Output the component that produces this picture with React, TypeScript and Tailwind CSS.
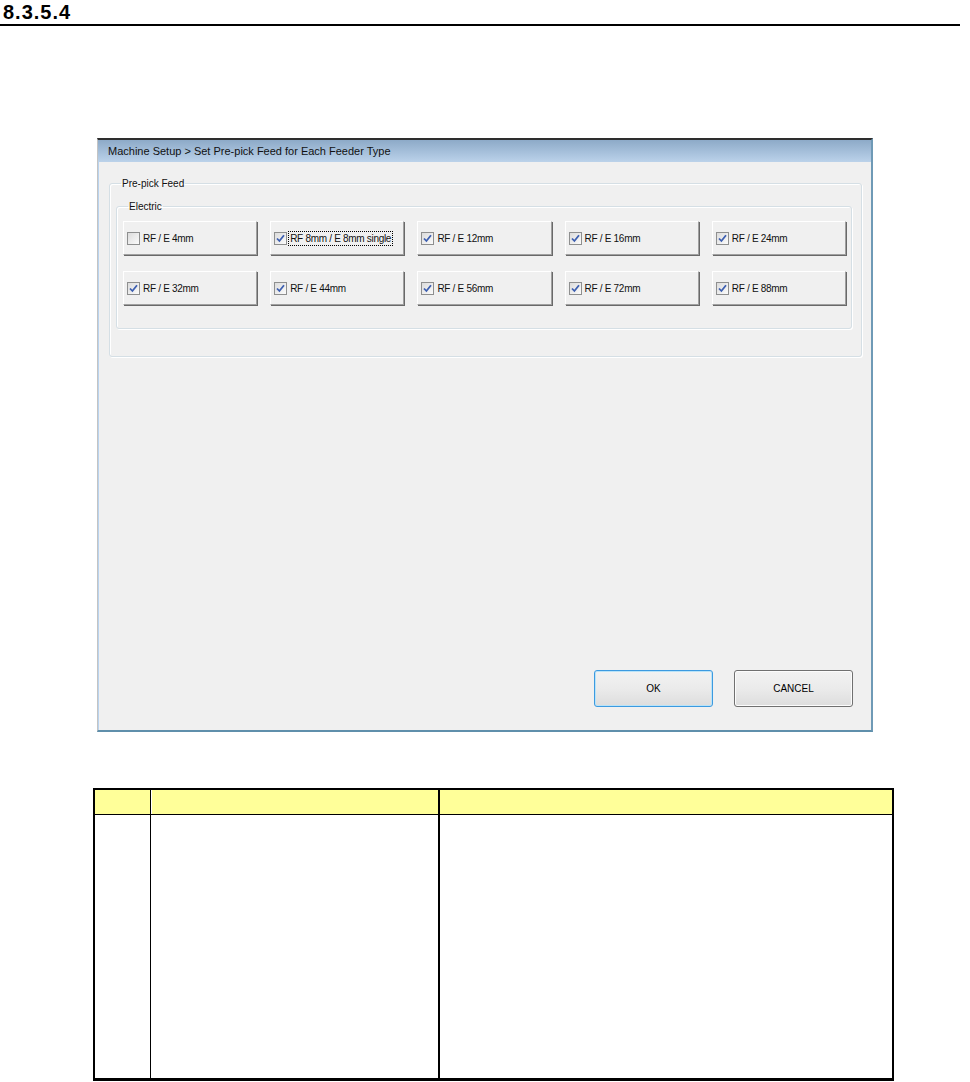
import type { ReactNode } from "react";

const feeders = [
  { label: "RF / E 4mm", checked: false },
  { label: "RF 8mm / E 8mm single", checked: true, focus: true },
  { label: "RF / E 12mm", checked: true },
  { label: "RF / E 16mm", checked: true },
  { label: "RF / E 24mm", checked: true },
  { label: "RF / E 32mm", checked: true },
  { label: "RF / E 44mm", checked: true },
  { label: "RF / E 56mm", checked: true },
  { label: "RF / E 72mm", checked: true },
  { label: "RF / E 88mm", checked: true },
];

function CheckBox({ checked }: { checked: boolean }) {
  return (
    <span className="flex h-[13px] w-[13px] shrink-0 items-center justify-center border border-[#8e8f8f] bg-gradient-to-br from-[#dcdcdc] to-[#fbfbfb]">
      {checked ? (
        <svg width="9" height="9" viewBox="0 0 9 9">
          <path d="M1 4.5 L3.4 7 L8 1.2" fill="none" stroke="#3d5fb0" strokeWidth="1.8" />
        </svg>
      ) : null}
    </span>
  );
}

function FeederButton({ label, checked, focus }: { label: string; checked: boolean; focus?: boolean }) {
  return (
    <div className="flex h-[34px] items-center gap-[2px] border border-t-white border-l-white border-r-[#a0a0a0] border-b-[#a0a0a0] bg-[#f0f0f0] pl-[3px] shadow-[1px_1px_0_#696969]">
      <CheckBox checked={checked} />
      <span
        className={`px-[1px] text-[10px] leading-[13px] tracking-[-0.3px] text-[#111] ${
          focus ? "outline outline-1 outline-dotted outline-black" : ""
        }`}
      >
        {label}
      </span>
    </div>
  );
}

function Group({ title, className, children }: { title: string; className?: string; children: ReactNode }) {
  return (
    <fieldset className={`rounded-[3px] border border-[#d5dfe5] shadow-[inset_1px_1px_0_#fff,1px_1px_0_#fff] ${className ?? ""}`}>
      <legend className="ml-[5px] px-[1px] text-[10px] leading-[13px] text-[#111]">{title}</legend>
      {children}
    </fieldset>
  );
}

function DialogButton({ label, primary }: { label: string; primary?: boolean }) {
  return (
    <div
      className={`flex h-[37px] w-[119px] items-center justify-center rounded-[3px] border bg-gradient-to-b from-[#f2f2f2] via-[#ebebeb] to-[#dddddd] text-[10px] text-black ${
        primary ? "border-[#3c9ae0] shadow-[inset_0_0_0_1px_#b9e3f8]" : "border-[#707070] shadow-[inset_0_0_0_1px_#fcfcfc]"
      }`}
    >
      {label}
    </div>
  );
}

export default function App() {
  return (
    <div className="h-[1082px] w-[970px] overflow-hidden bg-white font-['Liberation_Sans',Arial,sans-serif]">
      <div className="mr-[10px] border-b-2 border-black pl-[3px] text-[20px] font-bold leading-[24px] tracking-[1px] text-black">
        8.3.5.4
      </div>

      <div className="ml-[97px] mt-[112px] flex h-[594px] w-[776px] flex-col border-t-2 border-t-[#2e2e2e] border-l border-l-[#c4c4c4] border-r-2 border-r-[#6f9ab6] border-b-2 border-b-[#5f8fab] bg-[#f0f0f0]">
        <div className="flex h-[22px] items-center bg-gradient-to-b from-[#8daac8] to-[#bbd2ea] pl-[10px] text-[11px] text-[#111]">
          Machine Setup &gt; Set Pre-pick Feed for Each Feeder Type
        </div>
        <div className="flex flex-1 flex-col border-l border-l-[#b9d3ef] pl-[10px] pr-[9px] pt-[15px]">
          <Group title="Pre-pick Feed" className="h-[180px] px-[6px] pt-[10px]">
            <Group title="Electric" className="mr-[3px] h-[129px] pl-[6px] pt-[8px]">
              <div className="grid w-[723px] grid-cols-5 gap-x-[13px] gap-y-[16px]">
                {feeders.map((f) => (
                  <FeederButton key={f.label} {...f} />
                ))}
              </div>
            </Group>
          </Group>
          <div className="flex-1" />
          <div className="flex justify-end gap-[21px] pb-[23px] pr-[9px]">
            <DialogButton label="OK" primary />
            <DialogButton label="CANCEL" />
          </div>
        </div>
      </div>

      <div className="ml-[93px] mt-[56px] flex h-[293px] w-[801px] flex-col border-2 border-b-[3px] border-black">
        <div className="grid h-[25px] grid-cols-[56px_289px_1fr] border-b border-black bg-[#ffff99]">
          <div className="border-r border-black" />
          <div className="border-r-2 border-black border-l border-l-white" />
          <div />
        </div>
        <div className="grid flex-1 grid-cols-[56px_289px_1fr]">
          <div className="border-r border-black" />
          <div className="border-r-2 border-black border-l border-l-white" />
          <div />
        </div>
      </div>
    </div>
  );
}
